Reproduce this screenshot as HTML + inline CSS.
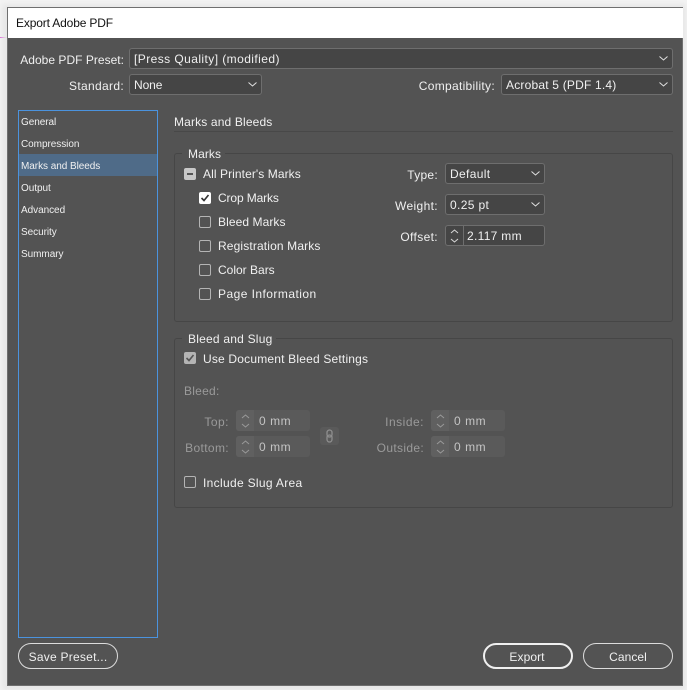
<!DOCTYPE html>
<html><head><meta charset="utf-8"><style>
html,body{margin:0;padding:0;width:687px;height:690px;overflow:hidden;background:#f4f4f4}
*{box-sizing:border-box}
div,span.a{position:absolute}
body{font-family:"Liberation Sans",sans-serif;font-size:12px;color:#f0f0f0;letter-spacing:.08px}
.t{white-space:nowrap;line-height:14px;height:14px;margin-top:1px}
.r{text-align:right}
.d{color:#9a9a9a}
.sel{background:#454545;border:1px solid #6e6e6e;border-radius:3px;height:21px;line-height:21px;padding-left:4px;white-space:nowrap}
.sel svg{position:absolute;right:3px;top:6px}
.cb{width:12px;height:12px;border:1px solid #b4b4b4;border-radius:2px}
.list{font-size:10px;letter-spacing:-.05px;left:21px;margin-top:3px}
.grp{border:1px solid #464646;border-radius:3px;left:174px;width:499px}
.lg{background:#535353;padding:0 4px 0 6px;left:182px}
.btn{border:1px solid #dcdcdc;border-radius:13px;height:26px;text-align:center;line-height:26px;background:#535353}
.spin{background:#454545;border:1px solid #6e6e6e;border-radius:3px;height:21px}
.sp2{background:#5a5a5a;border-radius:3px;height:21px;width:74px}
.sp2 .sep{left:0;top:0;width:18px;height:21px;background:#606060;border-radius:3px 0 0 3px}
.sp2 .v{left:23px;top:3px;color:#c4c4c4;letter-spacing:.55px}
.sp2 svg{position:absolute;left:4px;top:3px}
</style></head><body>
<div style="left:0;top:37px;width:8px;height:1px;background:#d94bd0"></div>
<div style="left:2px;top:4px;width:684px;height:686px;background:#e6e6e6;filter:blur(3px)"></div>
<div style="left:7px;top:7px;height:679px;border:1px solid #6f6f6f;background:#535353;width:676px"></div>
<div style="left:8px;top:8px;width:675px;height:30px;background:#fff"></div>
<div class="t" style="left:16px;top:15px;color:#111;letter-spacing:-.15px">Export Adobe PDF</div>

<div class="t r" style="left:0;width:124px;top:52px;letter-spacing:.02px">Adobe PDF Preset:</div>
<div class="sel" style="left:129px;top:48px;width:544px;letter-spacing:.43px">[Press Quality] (modified)<svg width="11" height="7" viewBox="0 0 11 7"><path d="M1.5 1.5L5.5 5L9.5 1.5" fill="none" stroke="#e0e0e0"/></svg></div>
<div class="t r" style="left:0;width:124px;top:78px;letter-spacing:.33px">Standard:</div>
<div class="sel" style="left:129px;top:74px;width:133px;letter-spacing:-.1px">None<svg width="11" height="7" viewBox="0 0 11 7"><path d="M1.5 1.5L5.5 5L9.5 1.5" fill="none" stroke="#e0e0e0"/></svg></div>
<div class="t r" style="left:380px;width:115px;top:78px;letter-spacing:.3px">Compatibility:</div>
<div class="sel" style="left:501px;top:74px;width:172px;letter-spacing:.2px">Acrobat 5 (PDF 1.4)<svg width="11" height="7" viewBox="0 0 11 7"><path d="M1.5 1.5L5.5 5L9.5 1.5" fill="none" stroke="#e0e0e0"/></svg></div>

<div style="left:18px;top:110px;width:140px;height:528px;border:1px solid #4b93de"></div>
<div style="left:19px;top:154px;width:138px;height:22px;background:#4f6b88"></div>
<div class="t list" style="top:113px">General</div>
<div class="t list" style="top:135px">Compression</div>
<div class="t list" style="top:157px">Marks and Bleeds</div>
<div class="t list" style="top:179px">Output</div>
<div class="t list" style="top:201px">Advanced</div>
<div class="t list" style="top:223px">Security</div>
<div class="t list" style="top:245px">Summary</div>

<div class="t" style="left:174px;top:114px;letter-spacing:.15px">Marks and Bleeds</div>
<div style="left:174px;top:131px;width:499px;height:1px;background:#484848"></div>

<div class="grp" style="top:153px;height:169px"></div>
<div class="t lg" style="top:146px">Marks</div>
<div style="left:184px;top:168px;width:12px;height:12px;background:#c8c8c8;border-radius:2px"><div style="left:3px;top:5px;width:6px;height:2px;background:#555"></div></div>
<div class="t" style="left:203px;top:166px">All Printer's Marks</div>
<div style="left:199px;top:192px;width:12px;height:12px;background:#fff;border-radius:2px"><svg style="position:absolute;left:0;top:0" width="12" height="12" viewBox="0 0 12 12"><path d="M2.5 6L5 8.5L9.5 3" fill="none" stroke="#333" stroke-width="1.6"/></svg></div>
<div class="t" style="left:218px;top:190px;letter-spacing:-.12px">Crop Marks</div>
<div class="cb" style="left:199px;top:216px"></div><div class="t" style="left:218px;top:214px">Bleed Marks</div>
<div class="cb" style="left:199px;top:240px"></div><div class="t" style="left:218px;top:238px;letter-spacing:.14px">Registration Marks</div>
<div class="cb" style="left:199px;top:264px"></div><div class="t" style="left:218px;top:262px;letter-spacing:0">Color Bars</div>
<div class="cb" style="left:199px;top:288px"></div><div class="t" style="left:218px;top:286px;letter-spacing:.45px">Page Information</div>

<div class="t r" style="left:380px;width:58px;top:167px;letter-spacing:.28px">Type:</div>
<div class="sel" style="left:445px;top:163px;width:100px;letter-spacing:.35px">Default<svg width="11" height="7" viewBox="0 0 11 7"><path d="M1.5 1.5L5.5 5L9.5 1.5" fill="none" stroke="#e0e0e0"/></svg></div>
<div class="t r" style="left:380px;width:58px;top:198px;letter-spacing:.36px">Weight:</div>
<div class="sel" style="left:445px;top:194px;width:100px;letter-spacing:.35px">0.25 pt<svg width="11" height="7" viewBox="0 0 11 7"><path d="M1.5 1.5L5.5 5L9.5 1.5" fill="none" stroke="#e0e0e0"/></svg></div>
<div class="t r" style="left:380px;width:58px;top:229px;letter-spacing:.36px">Offset:</div>
<div class="spin" style="left:445px;top:225px;width:100px"><div style="left:17px;top:0;width:1px;height:19px;background:#6e6e6e"></div><svg style="position:absolute;left:3px;top:2px" width="11" height="16" viewBox="0 0 11 16"><path d="M2 5L5.5 2L9 5M2 11L5.5 14L9 11" fill="none" stroke="#d8d8d8"/></svg><div class="t" style="left:21px;top:2px;letter-spacing:.3px">2.117 mm</div></div>

<div class="grp" style="top:338px;height:170px"></div>
<div class="t lg" style="top:331px;letter-spacing:.22px">Bleed and Slug</div>
<div style="left:184px;top:352px;width:12px;height:12px;background:#b4b4b4;border-radius:2px"><svg style="position:absolute;left:0;top:0" width="12" height="12" viewBox="0 0 12 12"><path d="M2.5 6L5 8.5L9.5 3" fill="none" stroke="#555" stroke-width="1.6"/></svg></div>
<div class="t" style="left:203px;top:351px;letter-spacing:.19px">Use Document Bleed Settings</div>
<div class="t d" style="left:184px;top:383px;letter-spacing:.25px">Bleed:</div>

<div class="t r d" style="left:170px;width:59px;top:414px;letter-spacing:.5px">Top:</div>
<div class="sp2" style="left:236px;top:410px"><div class="sep"></div><svg width="11" height="16" viewBox="0 0 11 16"><path d="M2 5L5.5 2L9 5M2 11L5.5 14L9 11" fill="none" stroke="#999"/></svg><div class="t v">0 mm</div></div>
<div class="t r d" style="left:170px;width:59px;top:440px;letter-spacing:.36px">Bottom:</div>
<div class="sp2" style="left:236px;top:436px"><div class="sep"></div><svg width="11" height="16" viewBox="0 0 11 16"><path d="M2 5L5.5 2L9 5M2 11L5.5 14L9 11" fill="none" stroke="#999"/></svg><div class="t v">0 mm</div></div>

<div style="left:320px;top:427px;width:19px;height:18px;background:#5a5a5a;border-radius:3px"><svg style="position:absolute;left:5px;top:2px" width="9" height="14" viewBox="0 0 9 14"><rect x="2" y="1" width="5" height="7" rx="2.5" fill="none" stroke="#8e8e8e" stroke-width="1.3"/><rect x="2" y="6" width="5" height="7" rx="2.5" fill="none" stroke="#8e8e8e" stroke-width="1.3"/></svg></div>

<div class="t r d" style="left:340px;width:84px;top:414px;letter-spacing:.5px">Inside:</div>
<div class="sp2" style="left:431px;top:410px"><div class="sep"></div><svg width="11" height="16" viewBox="0 0 11 16"><path d="M2 5L5.5 2L9 5M2 11L5.5 14L9 11" fill="none" stroke="#999"/></svg><div class="t v">0 mm</div></div>
<div class="t r d" style="left:340px;width:84px;top:440px;letter-spacing:.33px">Outside:</div>
<div class="sp2" style="left:431px;top:436px"><div class="sep"></div><svg width="11" height="16" viewBox="0 0 11 16"><path d="M2 5L5.5 2L9 5M2 11L5.5 14L9 11" fill="none" stroke="#999"/></svg><div class="t v">0 mm</div></div>

<div class="cb" style="left:184px;top:476px"></div><div class="t" style="left:203px;top:475px;letter-spacing:.32px">Include Slug Area</div>

<div class="btn" style="left:18px;top:643px;width:100px;letter-spacing:.25px">Save Preset...</div>
<div class="btn" style="left:483px;top:643px;width:90px;border:2px solid #f0f0f0;line-height:24px;padding-right:2px">Export</div>
<div class="btn" style="left:583px;top:643px;width:90px">Cancel</div>
</body></html>
